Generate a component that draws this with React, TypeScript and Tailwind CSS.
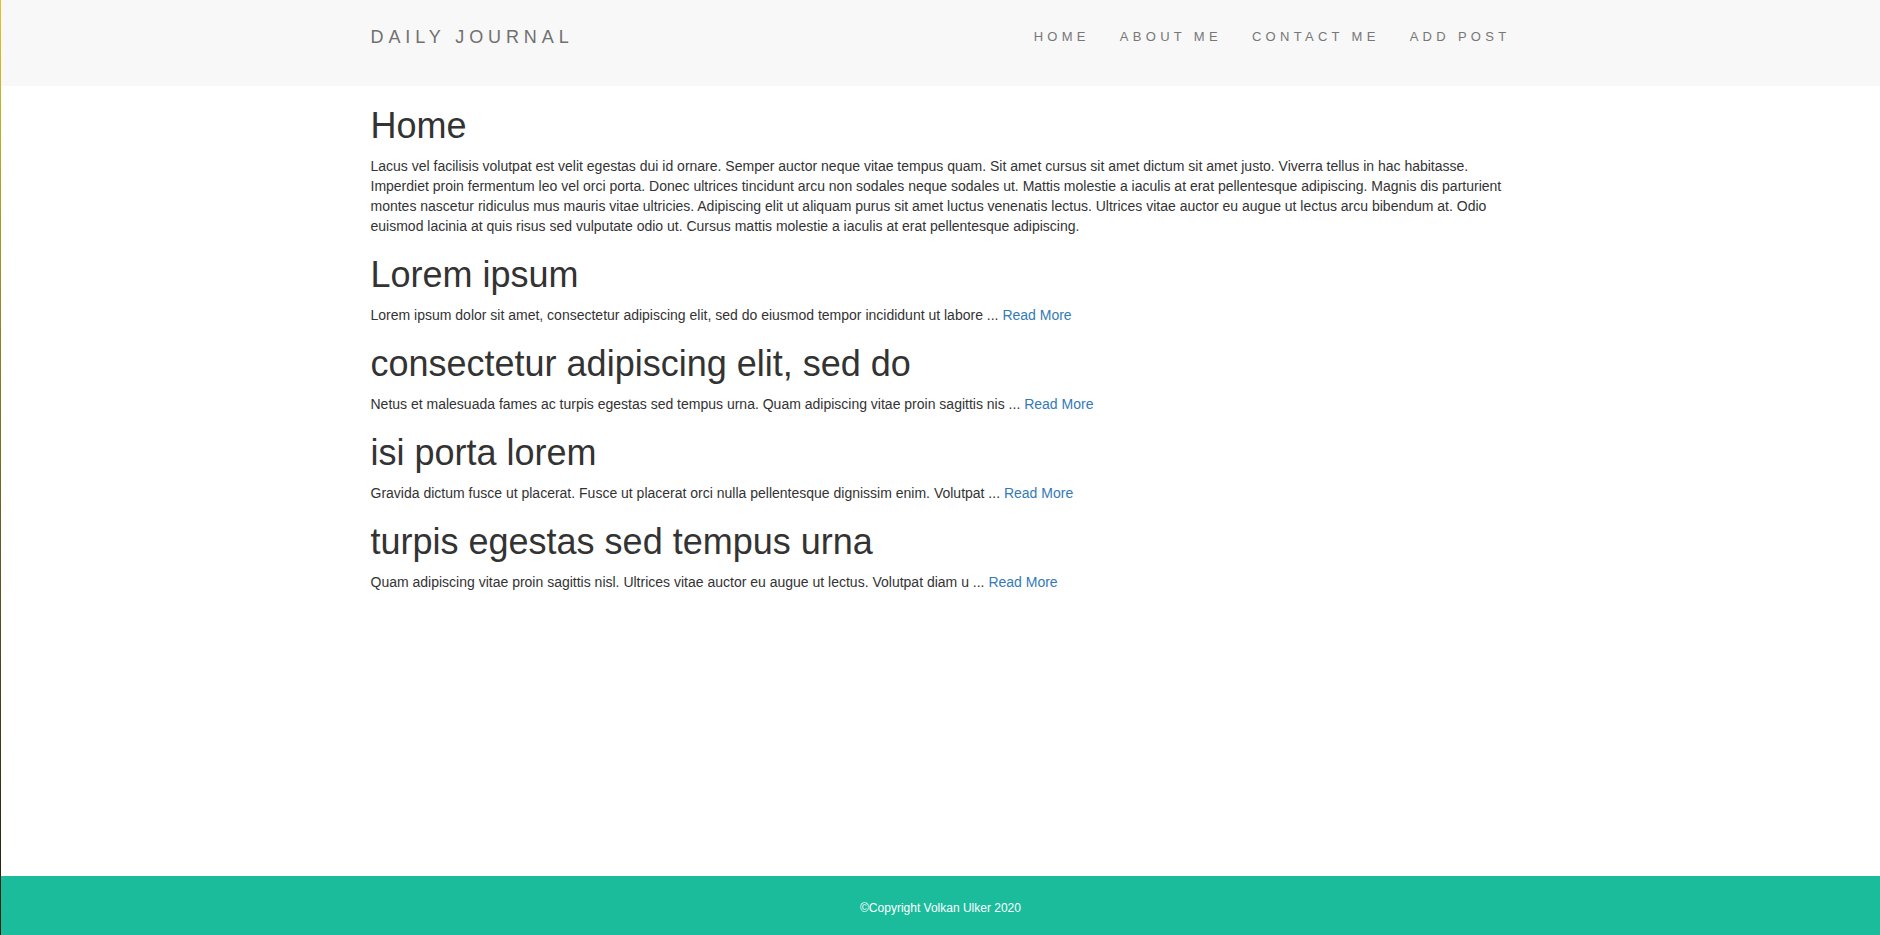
import React from 'react';

// Post previews shown under the intro
const posts = [
  {
    title: 'Lorem ipsum',
    excerpt: 'Lorem ipsum dolor sit amet, consectetur adipiscing elit, sed do eiusmod tempor incididunt ut labore',
  },
  {
    title: 'consectetur adipiscing elit, sed do',
    excerpt: 'Netus et malesuada fames ac turpis egestas sed tempus urna. Quam adipiscing vitae proin sagittis nis',
  },
  {
    title: 'isi porta lorem',
    excerpt: 'Gravida dictum fusce ut placerat. Fusce ut placerat orci nulla pellentesque dignissim enim. Volutpat',
  },
  {
    title: 'turpis egestas sed tempus urna',
    excerpt: 'Quam adipiscing vitae proin sagittis nisl. Ultrices vitae auctor eu augue ut lectus. Volutpat diam u',
  },
];

const navLinks = ['HOME', 'ABOUT ME', 'CONTACT ME', 'ADD POST'];

const intro =
  'Lacus vel facilisis volutpat est velit egestas dui id ornare. Semper auctor neque vitae tempus quam. Sit amet cursus sit amet dictum sit amet justo. Viverra tellus in hac habitasse. Imperdiet proin fermentum leo vel orci porta. Donec ultrices tincidunt arcu non sodales neque sodales ut. Mattis molestie a iaculis at erat pellentesque adipiscing. Magnis dis parturient montes nascetur ridiculus mus mauris vitae ultricies. Adipiscing elit ut aliquam purus sit amet luctus venenatis lectus. Ultrices vitae auctor eu augue ut lectus arcu bibendum at. Odio euismod lacinia at quis risus sed vulputate odio ut. Cursus mattis molestie a iaculis at erat pellentesque adipiscing.';

const Navbar = () => (
  <header className="h-[86px] bg-[#f8f8f8]">
    <div className="mx-auto flex h-[73px] w-[1170px] items-center justify-between px-[15px]">
      <a href="#" className="text-[18px] leading-[20px] tracking-[4.9px] text-[#707070]">
        DAILY JOURNAL
      </a>
      <ul className="-mr-[15px] flex">
        {navLinks.map((link) => (
          <li key={link}>
            <a href="#" className="block px-[15px] text-[13px] leading-[20px] tracking-[4.3px] text-[#777]">
              {link}
            </a>
          </li>
        ))}
      </ul>
    </div>
  </header>
);

export default function App() {
  return (
    <div className="flex min-h-screen">
      {/* thin edge of the browser window */}
      <div className="w-px shrink-0 bg-linear-to-b from-[#e3c41c] to-[#1c1c10]" />
      <div className="flex min-w-0 flex-1 flex-col font-['Liberation_Sans',Arial,sans-serif] text-[14px] leading-[20px] text-[#333]">
        <Navbar />

        <main className="mx-auto w-[1170px] px-[15px]">
          <h1 className="mt-[20px] mb-[10px] text-[36px] leading-[1.1] font-normal">Home</h1>
          <p className="mb-[10px]">{intro}</p>

          {posts.map((post) => (
            <div key={post.title}>
              <h1 className="mt-[19.5px] mb-[10px] text-[36px] leading-[1.1] font-normal">{post.title}</h1>
              <p className="mb-[10px]">
                {post.excerpt} ...{' '}
                <a href="#" className="text-[#337ab7]">
                  Read More
                </a>
              </p>
            </div>
          ))}
        </main>

        <footer className="mt-auto flex h-[59px] items-center justify-center bg-[#1abc9c] pt-[5px] text-[12px] leading-[17px] text-white">
          <p>©Copyright Volkan Ulker 2020</p>
        </footer>
      </div>
    </div>
  );
}
